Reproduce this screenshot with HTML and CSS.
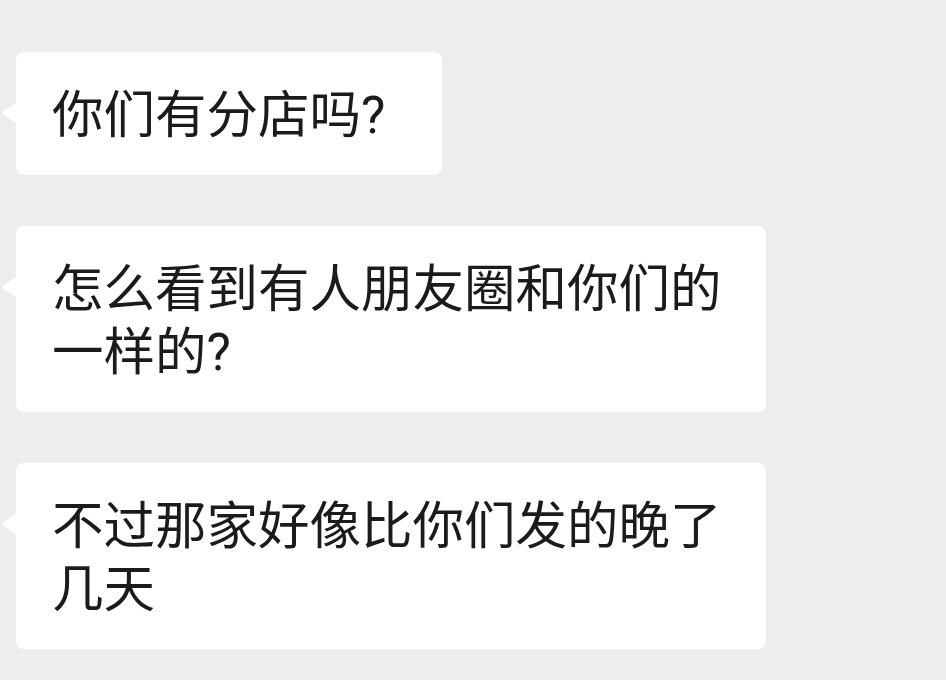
FILE: index.html
```html
<!DOCTYPE html>
<html lang="zh-CN">
<head>
<meta charset="utf-8">
<title>Chat</title>
<link rel="stylesheet" href="styles.css">
</head>
<body>
<main class="chat">
  <div class="bubble bubble-short">你们有分店吗?</div>
  <div class="bubble bubble-long">怎么看到有人朋友圈和你们的一样的?</div>
  <div class="bubble bubble-long">不过那家好像比你们发的晚了几天</div>
</main>
</body>
</html>
```
FILE: styles.css
```css
html, body {
  margin: 0;
  padding: 0;
  background: #ededed;
}
.chat {
  display: flex;
  flex-direction: column;
  align-items: flex-start;
  gap: 51px;
  padding: 52px 0 0 16px;
  font-family: "Roboto", "Noto Sans CJK SC", sans-serif;
}
.bubble {
  position: relative;
  box-sizing: border-box;
  background: #ffffff;
  border-radius: 8px;
  padding: 32px 30px 28px 36px;
  font-size: 51.5px;
  line-height: 63px;
  color: #1b1b1b;
}
.bubble::before {
  content: "";
  position: absolute;
  left: -14px;
  top: 50px;
  width: 15px;
  height: 22px;
  background: #ffffff;
  clip-path: polygon(100% 0, 4% 45%, 4% 55%, 100% 100%);
}
.bubble-short {
  width: 426px;
}
.bubble-long {
  width: 750px;
}
```
